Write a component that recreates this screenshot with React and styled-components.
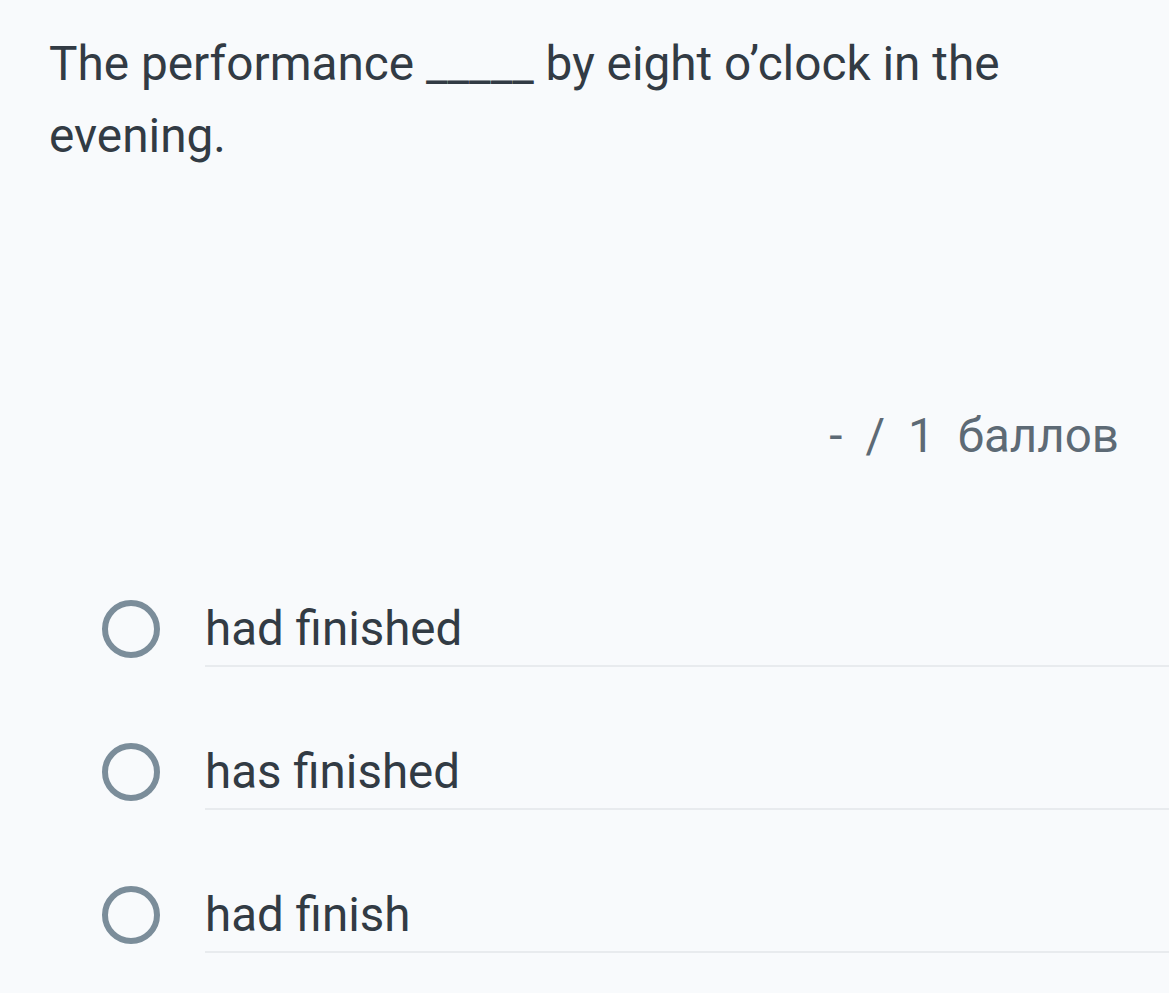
import React from "react";
import styled, { createGlobalStyle } from "styled-components";

const GlobalStyle = createGlobalStyle`
  html, body {
    margin: 0;
    padding: 0;
    background: #f8fafc;
  }
  body {
    font-family: Roboto, "Noto Sans", "Liberation Sans", sans-serif;
  }
`;

const Page = styled.div`
  min-height: 993px;
  padding: 28px 50px 0 49px;
  box-sizing: border-box;
  background: #f8fafc;
`;

const Question = styled.div`
  font-size: 47.75px;
  line-height: 72px;
  color: #323b44;
`;

const Score = styled.div`
  display: flex;
  justify-content: flex-end;
  gap: 23px;
  margin-top: 228px;
  font-size: 47.5px;
  line-height: 72px;
  color: #5d6a75;
`;

const Options = styled.div`
  display: flex;
  flex-direction: column;
  gap: 69px;
  margin-top: 121px;
  margin-right: -50px;
  padding-left: 53px;
`;

const Row = styled.label`
  display: flex;
  align-items: flex-start;
  gap: 45px;
  cursor: pointer;
`;

const Radio = styled.span`
  flex: none;
  width: 58px;
  height: 58px;
  margin-top: 7px;
  box-sizing: border-box;
  border: 6px solid #7b8d9a;
  border-radius: 50%;
`;

const Label = styled.span`
  flex: 1;
  font-size: 47.5px;
  line-height: 72px;
  color: #323b44;
  border-bottom: 2px solid #e8ebee;
`;

const options = ["had finished", "has finished", "had finish"];

export default function App() {
  return (
    <>
      <GlobalStyle />
      <Page>
        <Question>
          The performance _____ by eight o’clock in the evening.
        </Question>
        <Score>
          <span>-</span>
          <span>/</span>
          <span>1</span>
          <span>баллов</span>
        </Score>
        <Options>
          {options.map((o) => (
            <Row key={o}>
              <Radio />
              <Label>{o}</Label>
            </Row>
          ))}
        </Options>
      </Page>
    </>
  );
}
